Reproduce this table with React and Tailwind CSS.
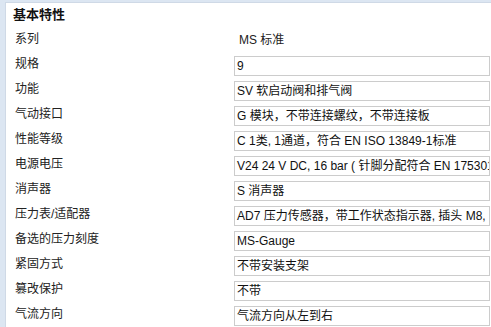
import React from 'react';

const rows = [
  { label: '系列', value: 'MS 标准', plain: true },
  { label: '规格', value: '9' },
  { label: '功能', value: 'SV 软启动阀和排气阀' },
  { label: '气动接口', value: 'G 模块，不带连接螺纹，不带连接板' },
  { label: '性能等级', value: 'C 1类, 1通道，符合 EN ISO 13849-1标准' },
  { label: '电源电压', value: 'V24 24 V DC, 16 bar ( 针脚分配符合 EN 175301-803 )' },
  { label: '消声器', value: 'S 消声器' },
  { label: '压力表/适配器', value: 'AD7 压力传感器，带工作状态指示器, 插头 M8, 3针' },
  { label: '备选的压力刻度', value: 'MS-Gauge' },
  { label: '紧固方式', value: '不带安装支架' },
  { label: '篡改保护', value: '不带' },
  { label: '气流方向', value: '气流方向从左到右' },
];

const font = { fontFamily: '"Liberation Sans", "Noto Sans CJK SC", sans-serif' };

const FieldRow = ({ label, value, plain }) => (
  <div className="flex h-[25px] items-center">
    <div className="w-[228px] shrink-0 pb-[3px] pl-[9px] text-[12px] text-[#222]">{label}</div>
    {plain ? (
      <div className="pl-[5px] pb-[1px] text-[12px] text-[#222]">{value}</div>
    ) : (
      <div className="flex items-center">
        <div className="h-[20px] w-[256px] overflow-hidden whitespace-nowrap border border-[#cccccc] bg-white pl-[2px] text-[12px] leading-[18px] text-[#111]">
          {value}
        </div>
        <div className="ml-[1px] h-[25px] w-[1px] shrink-0 bg-[#cccccc]" />
      </div>
    )}
  </div>
);

export default function App() {
  return (
    <div className="h-[327px] w-[491px] overflow-hidden bg-[#dce6f2] pl-[5px] pt-[2px]" style={font}>
      <div className="h-full w-full overflow-hidden border-l border-t border-[#cfd9e6] bg-white">
        <div className="flex h-[25px] items-center pl-[7px] pb-[1px] text-[13px] font-bold text-[#111]">基本特性</div>
        {rows.map((row) => (
          <FieldRow key={row.label} {...row} />
        ))}
      </div>
    </div>
  );
}
